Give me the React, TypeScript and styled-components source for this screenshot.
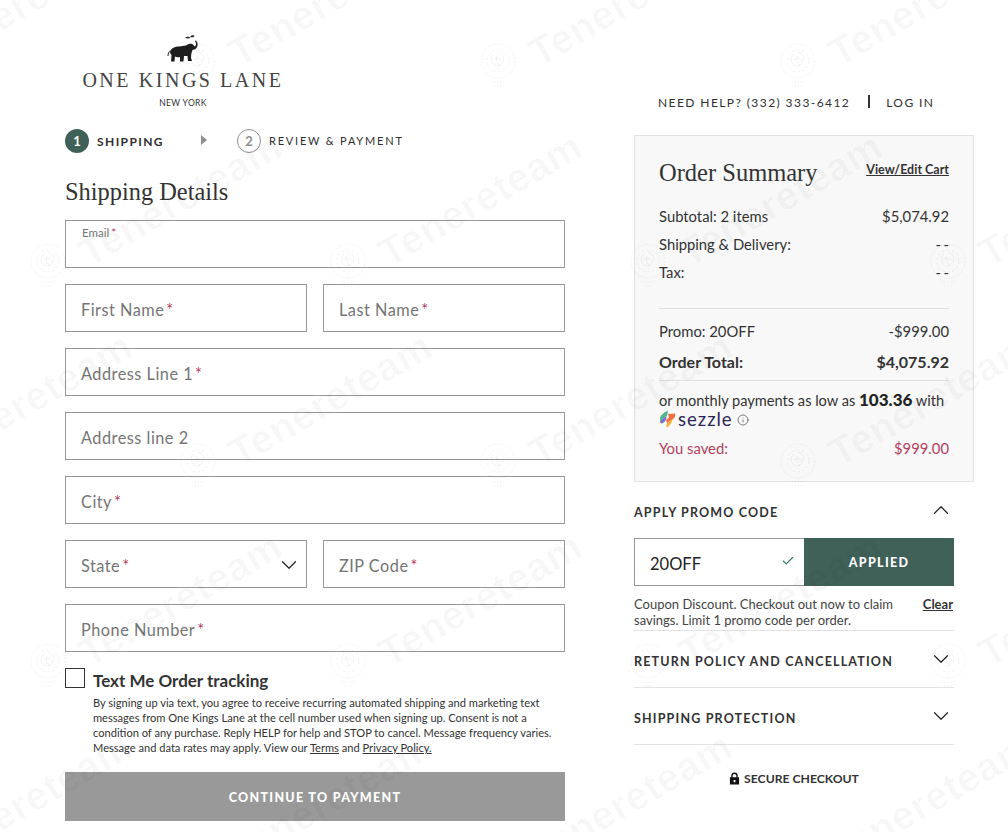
import React from 'react'
import styled, { createGlobalStyle } from 'styled-components'
import { ChevronDown, ChevronUp, Check, Info } from 'lucide-react'

const sans = `Lato, "Noto Sans", sans-serif`
const serif = `"Liberation Serif", serif`
const ink = '#2f2f2f'
const green = '#3f6158'
const wine = '#b2405f'

const GlobalStyle = createGlobalStyle`
  html, body { margin: 0; padding: 0; background: #fff; }
  body { font-family: ${sans}; color: ${ink}; }
  * { box-sizing: border-box; }
`

const Page = styled.div`
  position: relative;
  width: 1008px;
  height: 832px;
  overflow: hidden;
  display: flex;
  gap: 69px;
  padding-left: 65px;
`
const LeftColumn = styled.main`
  width: 500px;
  flex: none;
`
const RightColumn = styled.aside`
  width: 340px;
  flex: none;
`

const Logo = styled.div`
  display: flex;
  flex-direction: column;
  align-items: center;
  width: 236px;
  height: 129px;
  padding-top: 35px;
`
const LogoName = styled.div`
  font-family: ${serif};
  font-size: 20px;
  line-height: 24px;
  letter-spacing: 2.55px;
  white-space: nowrap;
  margin-top: 5px;
  color: #444;
`
const LogoCity = styled.div`
  font-size: 8.5px;
  line-height: 10px;
  letter-spacing: 0.35px;
  margin-top: 6px;
  color: #333;
`

const Stepper = styled.div`
  display: flex;
  align-items: center;
  height: 24px;
`
const StepCircle = styled.div<{ $active?: boolean }>`
  width: 24px;
  height: 24px;
  border-radius: 50%;
  display: flex;
  align-items: center;
  justify-content: center;
  font-size: 13px;
  font-weight: 700;
  background: ${p => (p.$active ? green : '#fff')};
  color: ${p => (p.$active ? '#fff' : '#8f8f8f')};
  border: ${p => (p.$active ? 'none' : '1px solid #8f8f8f')};
`
const StepLabel = styled.div<{ $active?: boolean }>`
  margin: ${p => (p.$active ? '0 0 0 8px' : '-2px 0 0 8px')};
  font-size: ${p => (p.$active ? 12 : 11)}px;
  font-weight: ${p => (p.$active ? 700 : 400)};
  letter-spacing: ${p => (p.$active ? 1.4 : 1.8)}px;
  width: ${p => (p.$active ? '104px' : 'auto')};
  white-space: nowrap;
`
const StepArrow = styled.div`
  width: 0;
  height: 0;
  border-left: 6px solid #8f8f8f;
  border-top: 5px solid transparent;
  border-bottom: 5px solid transparent;
  margin-right: 30px;
  margin-top: -2px;
`

const Title = styled.h1`
  margin: 24px 0 0;
  font-family: ${serif};
  font-weight: 400;
  font-size: 24.4px;
  line-height: 30px;
  color: #333;
`

const Form = styled.form`
  margin-top: 13px;
  display: grid;
  grid-template-columns: 1fr 1fr;
  gap: 16px;
`
const Field = styled.div<{ $half?: boolean; $floated?: boolean }>`
  grid-column: ${p => (p.$half ? 'span 1' : 'span 2')};
  position: relative;
  height: 48px;
  border: 1px solid #979797;
  background: #fff;
  display: flex;
  align-items: ${p => (p.$floated ? 'flex-start' : 'center')};
  justify-content: space-between;
  padding: ${p => (p.$floated ? '5px 16px 0' : '2px 4px 0 15px')};
`
const FieldLabel = styled.label<{ $small?: boolean }>`
  font-size: ${p => (p.$small ? 11.5 : 16.3)}px;
  letter-spacing: ${p => (p.$small ? 0 : 0.5)}px;
  color: #757575;
  white-space: nowrap;
`
const Star = styled.span`
  color: ${wine};
  margin-left: 2px;
`

const TextMe = styled.div`
  margin-top: 16px;
  display: grid;
  grid-template-columns: 20px 1fr;
  column-gap: 8px;
`
const CheckBox = styled.div`
  width: 20px;
  height: 20px;
  border: 1px solid #333;
  background: #fff;
`
const TextMeTitle = styled.div`
  font-size: 17px;
  line-height: 26px;
  font-weight: 700;
  color: #333;
`
const Legal = styled.p`
  grid-column: 2;
  margin: 1px 0 0;
  font-size: 11.1px;
  line-height: 15px;
  color: #333;
  width: 472px;
  a { color: inherit; text-decoration: underline; }
`
const ContinueButton = styled.button`
  display: block;
  width: 500px;
  height: 49px;
  margin-top: 17px;
  padding: 2px 0 0;
  border: none;
  background: #999;
  color: #fff;
  font-family: ${sans};
  font-size: 12.5px;
  font-weight: 900;
  letter-spacing: 1.3px;
`

const HelpBar = styled.div`
  height: 135px;
  padding: 95px 0 0 24px;
  display: flex;
  align-items: flex-start;
  font-size: 12px;
  line-height: 15px;
  letter-spacing: 1.42px;
  white-space: nowrap;
`
const HelpSep = styled.span`
  width: 2px;
  height: 13px;
  background: #333;
  margin: 0 16px 0 18px;
`

const Summary = styled.section`
  width: 340px;
  height: 347px;
  background: #f8f8f8;
  border: 1px solid #e2e2e2;
  padding: 22px 24px 0;
`
const SummaryHead = styled.div`
  display: flex;
  justify-content: space-between;
  align-items: flex-start;
  margin-bottom: 14px;
`
const SummaryTitle = styled.h2`
  margin: 0;
  font-family: ${serif};
  font-weight: 400;
  font-size: 24.5px;
  line-height: 30px;
  color: #333;
`
const CartLink = styled.a`
  font-size: 12.5px;
  font-weight: 700;
  line-height: 20px;
  margin-top: 2px;
  text-decoration: underline;
  color: #333;
`
const Row = styled.div<{ $bold?: boolean; $wine?: boolean; $h?: number }>`
  display: flex;
  justify-content: space-between;
  align-items: center;
  height: ${p => p.$h ?? 28}px;
  font-size: ${p => (p.$bold ? 16 : 14.8)}px;
  font-weight: ${p => (p.$bold ? 700 : 400)};
  color: ${p => (p.$wine ? wine : '#333')};
`
const Dashes = styled.span`
  letter-spacing: 2.5px;
  margin-right: -2.5px;
`
const Rule = styled.hr<{ $top?: number; $bottom?: number }>`
  border: none;
  height: 1px;
  background: #e2e2e2;
  margin: ${p => p.$top ?? 0}px 0 ${p => p.$bottom ?? 0}px;
`
const Monthly = styled.div`
  margin-top: 9px;
  font-size: 14.6px;
  line-height: 20px;
  color: #333;
  white-space: nowrap;
  b { font-size: 17px; font-weight: 900; color: #222; }
`
const SezzleLine = styled.div`
  display: flex;
  align-items: center;
  height: 18px;
  color: #2b2757;
  margin: -1px 0 6px;
  svg:last-child { color: #555; margin: 1px 0 0 4px; }
`
const SezzleWord = styled.span`
  font-size: 18.5px;
  line-height: 18px;
  letter-spacing: 1px;
  margin-left: 2px;
`

const Accordion = styled.div`
  width: 320px;
`
const AccordionHead = styled.div<{ $line?: boolean; $h: number }>`
  height: ${p => p.$h}px;
  padding-top: 4px;
  display: flex;
  justify-content: space-between;
  align-items: center;
  font-size: 12.5px;
  font-weight: 700;
  letter-spacing: 1.17px;
  white-space: nowrap;
  color: #333;
  border-bottom: ${p => (p.$line ? '1px solid #e2e2e2' : 'none')};
  svg { margin: -5px 0 0 0; color: #222; }
`
const PromoRow = styled.div`
  display: flex;
  height: 48px;
`
const PromoInput = styled.div`
  width: 170px;
  border: 1px solid #979797;
  border-right: none;
  background: #fff;
  display: flex;
  align-items: center;
  justify-content: space-between;
  padding: 3px 9px 0 15px;
  font-size: 16.5px;
  color: #222;
  svg { color: #2f7d62; margin-top: -6px; }
`
const PromoButton = styled.button`
  width: 150px;
  border: none;
  background: ${green};
  color: #fff;
  font-family: ${sans};
  font-size: 12.5px;
  font-weight: 900;
  letter-spacing: 1.3px;
`
const PromoNote = styled.div`
  display: flex;
  justify-content: space-between;
  padding-top: 10px;
  height: 45px;
  font-size: 13px;
  line-height: 16px;
  border-bottom: 1px solid #e2e2e2;
  color: #444;
  white-space: nowrap;
  a { font-weight: 700; text-decoration: underline; color: #333; margin-right: 1px; }
`
const Secure = styled.div`
  display: flex;
  justify-content: center;
  align-items: center;
  gap: 4px;
  margin-top: 26px;
  font-size: 12.2px;
  font-weight: 700;
  color: #333;
`

const Watermarks = styled.div`
  position: absolute;
  inset: 0;
  pointer-events: none;
`
const MarkText = styled.span`
  position: absolute;
  font-family: "Liberation Sans", sans-serif;
  font-weight: 700;
  font-size: 40px;
  line-height: 40px;
  letter-spacing: 0.5px;
  color: rgba(0, 0, 0, 0.03);
  transform: rotate(-30deg);
  transform-origin: 0 100%;
  white-space: nowrap;
`
const MarkFlower = styled.svg`
  position: absolute;
  width: 36px;
  height: 46px;
  color: rgba(0, 0, 0, 0.05);
`

const Flower = ({ x, y }: { x: number; y: number }) => (
  <MarkFlower viewBox="0 0 36 46" style={{ left: x, top: y }} fill="none" stroke="currentColor">
    <circle cx="18" cy="18" r="17" strokeDasharray="2 1" />
    <circle cx="18" cy="18" r="11" strokeDasharray="3 2" />
    <path d="M18 9c5 2 7 6 5 10s-7 5-10 2-2-8 1-10M13 17c3-2 7-2 9 1M17 13c-1 4 0 8 3 10" />
    <path d="M11 39h14M14 43h8" strokeDasharray="2 1" />
  </MarkFlower>
)

// lattice of the faint repeated stamp
const marks: { x: number; y: number }[] = []
for (let row = 0; row < 5; row++) {
  for (let col = -1; col < 5; col++) {
    marks.push({ x: col * 300 + (row % 2 ? 95 : 245), y: row * 200 + 65 })
  }
}

const Elephant = () => (
  <svg width="32" height="28" viewBox="0 0 32 28" fill="#1d1d1d">
    <path d="M3 17C4 13 8 11.500 12 11.500L19 10.500C21 9 23 8.500 25 9C26.500 9.500 27 11 27.500 11.500C28.500 11 29.500 10 29 8C28.500 7 28 6.500 28 5.500L29.500 6C31 8 31 11 29.500 13C28 14.500 26.500 14.500 25.500 15C24.500 17 24 20 24 23L25 26L21 26L20.500 21L17 21L16.500 26.500L13 26.500L13 22C11 22.500 9 22 8 21.500L7.500 26.500L4 26.500L4.500 20C3.500 19 3 18 3 17Z" />
    <path d="M3 16C2 17.500 1.500 19 1.500 21L.5 21C.5 18.500 1.500 16.500 3 15.500Z" />
    <path d="M18 2.500C20 1.500 22 1.500 23.500 2.800C22 3.800 19.800 3.800 18 2.500ZM23.500 1C25 0 26.500 0 27.500 .8C26.800 2.200 25 2.800 23.500 2Z" />
  </svg>
)

const SezzleMark = () => (
  <svg width="17" height="18" viewBox="0 0 17 18">
    <path d="M1 9C1 5 5 3 8.500 .5c.6 2 .4 4-1 5.500L1 11z" fill="#4fb58e" />
    <path d="M1 11l6.500-5c-.2 2 0 3.500-1.500 5-1 1.200-2.500 2.500-3.500 2.500C1.500 13 1 12 1 11z" fill="#7b6cc4" />
    <path d="M9 4l7-.5c.8 2.500-.5 4.500-2.500 6L8 13l-1-3 3-2.500z" fill="#f2703f" />
    <path d="M8 13l5.500-3.500c-.5 3-2.500 6-5.500 8-1-1.500-1-3 0-4.500z" fill="#f5b335" />
  </svg>
)

const Lock = () => (
  <svg width="11" height="13" viewBox="0 0 12 13" fill="#111">
    <path d="M1 5h1.500V3.500a3.500 3.500 0 0 1 7 0V5H11v8H1zM4 5h4V3.500a2 2 0 0 0-4 0zM5 8v2.500h2V8z" fillRule="evenodd" />
  </svg>
)

const Required = ({ children, half }: { children: string; half?: boolean }) => (
  <Field $half={half}>
    <FieldLabel>{children}<Star>*</Star></FieldLabel>
  </Field>
)

export default function App() {
  return (
    <>
      <GlobalStyle />
      <Page>
        <LeftColumn>
          <Logo>
            <Elephant />
            <LogoName>ONE KINGS LANE</LogoName>
            <LogoCity>NEW YORK</LogoCity>
          </Logo>
          <Stepper>
            <StepCircle $active>1</StepCircle>
            <StepLabel $active>SHIPPING</StepLabel>
            <StepArrow />
            <StepCircle>2</StepCircle>
            <StepLabel>REVIEW &amp; PAYMENT</StepLabel>
          </Stepper>
          <Title>Shipping Details</Title>
          <Form>
            <Field $floated>
              <FieldLabel $small>Email<Star>*</Star></FieldLabel>
            </Field>
            <Required half>First Name</Required>
            <Required half>Last Name</Required>
            <Required>Address Line 1</Required>
            <Field><FieldLabel>Address line 2</FieldLabel></Field>
            <Required>City</Required>
            <Field $half>
              <FieldLabel>State<Star>*</Star></FieldLabel>
              <ChevronDown size={26} strokeWidth={1.1} color="#222" />
            </Field>
            <Required half>ZIP Code</Required>
            <Required>Phone Number</Required>
          </Form>
          <TextMe>
            <CheckBox />
            <TextMeTitle>Text Me Order tracking</TextMeTitle>
            <Legal>
              By signing up via text, you agree to receive recurring automated shipping and marketing text
              messages from One Kings Lane at the cell number used when signing up. Consent is not a
              condition of any purchase. Reply HELP for help and STOP to cancel. Message frequency varies.
              Message and data rates may apply. View our <a>Terms</a> and <a>Privacy Policy.</a>
            </Legal>
          </TextMe>
          <ContinueButton>CONTINUE TO PAYMENT</ContinueButton>
        </LeftColumn>

        <RightColumn>
          <HelpBar>
            NEED HELP? (332) 333-6412
            <HelpSep />
            LOG IN
          </HelpBar>
          <Summary>
            <SummaryHead>
              <SummaryTitle>Order Summary</SummaryTitle>
              <CartLink>View/Edit Cart</CartLink>
            </SummaryHead>
            <Row><span>Subtotal: 2 items</span><span>$5,074.92</span></Row>
            <Row><span>Shipping &amp; Delivery:</span><Dashes>--</Dashes></Row>
            <Row><span>Tax:</span><Dashes>--</Dashes></Row>
            <Rule $top={22} $bottom={8} />
            <Row><span>Promo: 20OFF</span><span>-$999.00</span></Row>
            <Row $bold $h={32}><span>Order Total:</span><span>$4,075.92</span></Row>
            <Rule $top={3} />
            <Monthly>or monthly payments as low as <b>103.36</b> with</Monthly>
            <SezzleLine>
              <SezzleMark />
              <SezzleWord>sezzle</SezzleWord>
              <Info size={12} strokeWidth={1.5} />
            </SezzleLine>
            <Row $wine><span>You saved:</span><span>$999.00</span></Row>
          </Summary>
          <Accordion>
            <AccordionHead $h={56}>APPLY PROMO CODE <ChevronUp size={26} strokeWidth={1.1} /></AccordionHead>
            <PromoRow>
              <PromoInput>20OFF <Check size={14} strokeWidth={2} /></PromoInput>
              <PromoButton>APPLIED</PromoButton>
            </PromoRow>
            <PromoNote>
              <span>Coupon Discount. Checkout out now to claim<br />savings. Limit 1 promo code per order.</span>
              <a>Clear</a>
            </PromoNote>
            <AccordionHead $line $h={57}>RETURN POLICY AND CANCELLATION <ChevronDown size={26} strokeWidth={1.1} /></AccordionHead>
            <AccordionHead $line $h={57}>SHIPPING PROTECTION <ChevronDown size={26} strokeWidth={1.1} /></AccordionHead>
            <Secure><Lock />SECURE CHECKOUT</Secure>
          </Accordion>
        </RightColumn>

        <Watermarks>
          {marks.map(m => (
            <React.Fragment key={`${m.x}-${m.y}`}>
              <MarkText style={{ left: m.x - 3, top: m.y - 32 }}>Tenereteam</MarkText>
              <Flower x={m.x - 65} y={m.y - 22} />
            </React.Fragment>
          ))}
        </Watermarks>
      </Page>
    </>
  )
}
